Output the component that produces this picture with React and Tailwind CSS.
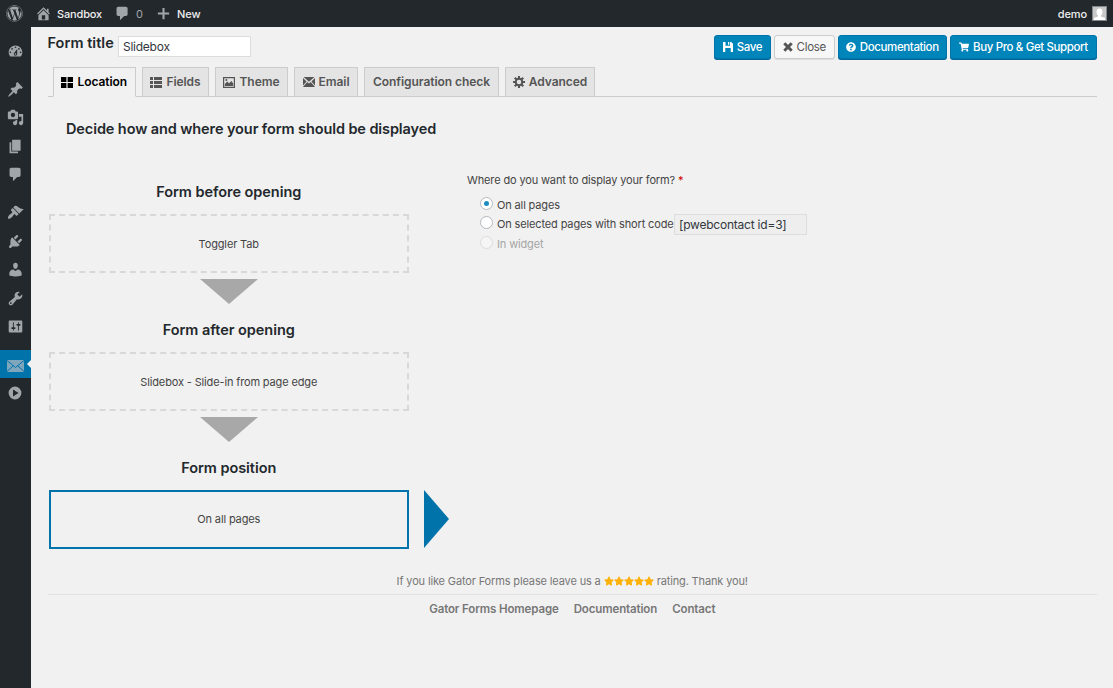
import React from "react";
import { FaWordpress, FaQuestionCircle, FaShoppingCart, FaStar } from "react-icons/fa";

const paths = {
  home: "M16 8.5l1.53 1.53-1.06 1.06L10 4.6l-6.47 6.49-1.06-1.06L10 2.5l4 4v-2h2v4zm-6-2.46l6 5.99V18H4v-5.97zM12 17v-5H8v5h4z",
  plus: "M17.5 8.6v2.8h-6.100v6.100H8.600v-6.100H2.500V8.600h6.100V2.500h2.800v6.100z",
  dashboard:
    "M3.76 16h12.48c1.1-1.37 1.76-3.11 1.76-5 0-4.42-3.58-8-8-8s-8 3.58-8 8c0 1.89.66 3.63 1.76 5zM10 4c.55 0 1 .45 1 1s-.45 1-1 1-1-.45-1-1 .45-1 1-1zM6 6c.55 0 1 .45 1 1s-.45 1-1 1-1-.45-1-1 .45-1 1-1zm8 0c.55 0 1 .45 1 1s-.45 1-1 1-1-.45-1-1 .45-1 1-1zm-5.37 5.55L12 7v6c0 1.1-.9 2-2 2s-2-.9-2-2c0-.57.24-1.08.63-1.45zM4 10c.55 0 1 .45 1 1s-.45 1-1 1-1-.45-1-1 .45-1 1-1zm12 0c.55 0 1 .45 1 1s-.45 1-1 1-1-.45-1-1 .45-1 1-1zm-5 3c0-.55-.45-1-1-1s-1 .45-1 1 .45 1 1 1 1-.45 1-1z",
  pin: "M10.44 3.02l1.82-1.82 6.36 6.35-1.83 1.82c-1.05-.68-2.48-.57-3.41.36l-.75.75c-.92.93-1.04 2.35-.35 3.41l-1.83 1.82-2.41-2.41-2.8 2.79c-.42.42-3.38 2.71-3.8 2.29s1.86-3.39 2.28-3.81l2.79-2.79L4.1 9.36l1.83-1.82c1.05.69 2.48.57 3.4-.36l.75-.75c.93-.92 1.05-2.35.36-3.41z",
  media:
    "M13 11V4c0-.55-.45-1-1-1h-1.67L9 1H5L3.67 3H2c-.55 0-1 .45-1 1v7c0 .55.45 1 1 1h10c.55 0 1-.45 1-1zM7 4.500c1.380 0 2.500 1.120 2.500 2.500S8.380 9.500 7 9.500 4.500 8.380 4.500 7 5.620 4.500 7 4.500zM14 6h5v10.500c0 1.380-1.120 2.500-2.500 2.500S14 17.880 14 16.500s1.120-2.500 2.500-2.500c.17 0 .34.02.5.05V9h-3V6zm-4 8.050V13h2v3.500c0 1.380-1.120 2.500-2.500 2.500S7 17.880 7 16.500 8.120 14 9.500 14c.17 0 .34.02.5.05z",
  page: "M6 15V2h10v13H6zm-1 1h8v2H3V5h2v11z",
  comment: "M5 2h9c1.1 0 2 .9 2 2v7c0 1.1-.9 2-2 2h-2l-5 5v-5H5c-1.1 0-2-.9-2-2V4c0-1.1.9-2 2-2z",
  brush:
    "M14.48 11.06L7.41 3.99l1.5-1.5c.5-.56 2.3-.47 3.51.32 1.21.8 1.43 1.28 2.91 2.1 1.18.64 2.45 1.26 4.45.85zm-.71.71L6.7 4.7 4.93 6.47c-.39.39-.39 1.02 0 1.41l1.06 1.06c.39.39.39 1.03 0 1.42-.6.6-1.43 1.11-2.21 1.69-.35.26-.7.53-1.01.84C1.43 14.23.4 16.08 1.4 17.07c.99 1 2.84-.03 4.18-1.36.31-.31.58-.66.85-1.02.57-.78 1.08-1.61 1.69-2.21.39-.39 1.02-.39 1.41 0l1.06 1.06c.39.39 1.02.39 1.41 0z",
  plug: "M13.11 4.36L9.87 7.6 8 5.73l3.24-3.24c.35-.34 1.05-.2 1.56.32.52.51.66 1.21.31 1.55zm-8 1.77l.91-1.12 9.01 9.01-1.19.84c-.71.71-2.63 1.16-3.82 1.16H6.14L4.9 17.26c-.59.59-1.54.59-2.12 0-.59-.58-.59-1.53 0-2.12l1.24-1.24v-3.88c0-1.13.4-3.19 1.09-3.89zm7.26 3.97l3.24-3.24c.34-.35 1.04-.21 1.55.31.52.51.66 1.21.31 1.55l-3.24 3.25z",
  user: "M10 9.25c-2.27 0-2.73-3.44-2.73-3.44C7 4.02 7.82 2 9.97 2c2.16 0 2.98 2.02 2.71 3.81 0 0-.41 3.44-2.68 3.44zm0 2.57L12.72 10c2.39 0 4.52 2.33 4.52 4.53v2.49s-3.65 1.13-7.24 1.13c-3.65 0-7.24-1.13-7.24-1.13v-2.49c0-2.25 1.94-4.48 4.47-4.48z",
  wrench:
    "M16.68 9.77c-1.34 1.34-3.3 1.67-4.95.99l-5.41 6.52c-.99.99-2.59.99-3.58 0s-.99-2.59 0-3.57l6.52-5.42c-.68-1.65-.35-3.61.99-4.95 1.28-1.28 3.12-1.62 4.72-1.06l-2.89 2.89 2.82 2.82 2.86-2.87c.53 1.58.18 3.39-1.08 4.65zM3.81 16.21c.4.39 1.04.39 1.43 0 .4-.4.4-1.04 0-1.43-.39-.4-1.03-.4-1.43 0-.39.39-.39 1.03 0 1.43z",
  settings:
    "M18 16V4c0-.55-.45-1-1-1H3c-.55 0-1 .45-1 1v12c0 .55.45 1 1 1h14c.55 0 1-.45 1-1zM8 11h1c.55 0 1 .45 1 1s-.45 1-1 1H8v1.500c0 .28-.22.5-.5.5s-.5-.22-.5-.5V13H6c-.55 0-1-.45-1-1s.45-1 1-1h1V5.500c0-.28.22-.5.5-.5s.5.22.5.5V11zm5-2h-1c-.55 0-1-.45-1-1s.45-1 1-1h1V5.500c0-.28.22-.5.5-.5s.5.22.5.5V7h1c.55 0 1 .45 1 1s-.45 1-1 1h-1v5.500c0 .28-.22.5-.5.5s-.5-.22-.5-.5V9z",
  play: "M10 2a8 8 0 1 0 0 16 8 8 0 0 0 0-16zM7.500 5.500L14.500 10l-7 4.500z",
};

function Icon({ name, className = "size-[17px]" }) {
  return (
    <svg viewBox="0 0 20 20" className={`shrink-0 ${className}`} fill="currentColor" fillRule="evenodd">
      <path d={paths[name]} />
    </svg>
  );
}

function GridIcon() {
  return (
    <svg viewBox="0 0 12 12" className="h-[11px] w-[12px]" preserveAspectRatio="none" fill="currentColor">
      <path d="M0 0h5.400v5.400H0zM6.600 0H12v5.400H6.600zM0 6.600h5.400V12H0zM6.600 6.600H12V12H6.600z" />
    </svg>
  );
}

function ListIcon() {
  return (
    <svg viewBox="0 0 12 11" className="h-[11px] w-[12px]" fill="currentColor">
      <path d="M0 0h3v3H0zM4 0h8v3H4zM0 4h3v3H0zM4 4h8v3H4zM0 8h3v3H0zM4 8h8v3H4z" />
    </svg>
  );
}

function ImageIcon() {
  return (
    <svg viewBox="0 0 12 11" className="h-[11px] w-[12px]" fill="currentColor" fillRule="evenodd">
      <path d="M0 0h12v11H0zM1.200 1.200v8.600h9.600V1.200z" />
      <path d="M1.800 9V7l2.400-2.500 1.800 1.800L8.500 4l1.700 2.500V9z" />
      <circle cx="3.400" cy="3" r="1" />
    </svg>
  );
}

function MailIcon() {
  return (
    <svg viewBox="0 0 12 10" className="h-[10px] w-[12px]" fill="currentColor">
      <path d="M.6 0h10.800L6 4.800zM0 1l3.600 3.400L0 8.500zM12 1v7.500L8.400 4.400zM4.300 5L6 6.500 7.700 5l4 4.500V10H.3v-.5z" />
    </svg>
  );
}

function GearIcon() {
  return (
    <svg viewBox="0 0 24 24" className="size-[12px]" fill="none" stroke="currentColor">
      <circle cx="12" cy="12" r="6.500" strokeWidth="4" />
      <path
        d="M12 0v5M12 19v5M0 12h5M19 12h5M3.500 3.500l3.600 3.600M16.900 16.900l3.600 3.600M3.500 20.500l3.600-3.600M16.900 7.100l3.600-3.600"
        strokeWidth="4.200"
      />
    </svg>
  );
}

function SaveIcon() {
  return (
    <svg viewBox="0 0 11 11" className="h-[10px] w-[10px]" fill="currentColor" fillRule="evenodd">
      <path d="M0 0h2.800v4.200h4.900V0H9l2 2v9H8.500V6.500h-6V11H0zM5.500 0h1.400v3H5.500z" />
    </svg>
  );
}

function CloseIcon() {
  return (
    <svg viewBox="0 0 10 10" className="size-[10px]" fill="none" stroke="currentColor" strokeWidth="3">
      <path d="M1.300 1.300l7.400 7.400M8.700 1.300L1.300 8.700" />
    </svg>
  );
}

const menu = [
  ["dashboard", "h-[38px] mb-[5px]"],
  ["pin", "h-[28.500px]"],
  ["media", "h-[28.500px]"],
  ["page", "h-[28.500px]"],
  ["comment", "h-[38px] pb-[9.500px]"],
  ["brush", "h-[28.500px]"],
  ["plug", "h-[28.500px]"],
  ["user", "h-[28.500px]"],
  ["wrench", "h-[28.500px]"],
  ["settings", "h-[28.500px]"],
];

function AdminBar() {
  return (
    <header className="flex h-[27px] shrink-0 items-center bg-[#23282d] pr-[6px] pl-[6px] text-[11px] font-medium text-[#eee]">
      <FaWordpress className="size-[17px] text-[#a0a5aa]" />
      <Icon name="home" className="ml-[12px] size-[17px] text-[#a0a5aa]" />
      <span className="ml-[5px] w-[45px] pt-px tracking-[-0.15px] whitespace-nowrap">Sandbox</span>
      <Icon name="comment" className="ml-[12px] size-[17px] text-[#a0a5aa]" />
      <span className="ml-[5px] w-[7px] pt-px font-normal text-[#a0a5aa]">0</span>
      <Icon name="plus" className="ml-[13px] size-[15px] text-[#a0a5aa]" />
      <span className="ml-[6px] pt-px tracking-[-0.1px]">New</span>
      <span className="ml-auto pt-px tracking-[-0.1px]">demo</span>
      <span className="ml-[5px] flex size-[15px] items-end justify-center overflow-hidden border border-[#82878c] bg-[#c8c8c8]">
        <svg viewBox="0 0 13 13" className="size-[13px]" fill="#fff">
          <ellipse cx="6.500" cy="5" rx="3" ry="3.600" />
          <path d="M5 8h3v1.500l4 1.500v2H1v-2l4-1.500z" />
        </svg>
      </span>
    </header>
  );
}

function Sidebar() {
  return (
    <nav className="flex w-[30.500px] shrink-0 flex-col bg-[#23282d] pt-[5px] text-[#a0a5aa]">
      {menu.map(([name, cls]) => (
        <a key={name} className={`flex shrink-0 items-center justify-center ${cls}`}>
          <Icon name={name} />
        </a>
      ))}
      <a className="relative mt-[9px] flex h-[28px] shrink-0 items-center justify-center bg-[#0073aa]">
        <svg viewBox="0 0 17 12" className="mt-[3px] h-[12px] w-[17px]">
          <path d="M0 0h17v12H0z" fill="#7fa6bd" />
          <path d="M0 .5l8.500 7L17 .5M0 11.500l6.200-5.700M17 11.500l-6.200-5.700" fill="none" stroke="#0073aa" />
        </svg>
        <svg viewBox="0 0 4 8" className="absolute top-[10px] right-0 h-[8px] w-[4px]" fill="#f1f1f1">
          <path d="M4 0v8L0 4z" />
        </svg>
      </a>
      <a className="flex h-[29px] shrink-0 items-center justify-center">
        <Icon name="play" className="size-[16px]" />
      </a>
    </nav>
  );
}

function Button({ width, light, icon, children }) {
  return (
    <button
      className={`flex h-[24px] items-center justify-center gap-[4px] rounded-[3px] border whitespace-nowrap ${width} ${
        light
          ? "border-[#ccc] bg-[#f7f7f7] text-[11.500px] tracking-[-0.3px] text-[#555] shadow-[0_1px_0_#ddd]"
          : "border-[#0073aa] bg-[#0085ba] text-[11.500px] font-medium tracking-[-0.38px] text-white shadow-[0_1px_0_#006799]"
      }`}
    >
      {icon}
      <span className="pt-px">{children}</span>
    </button>
  );
}

function Tab({ width, active, icon, children }) {
  return (
    <a
      className={`flex items-center justify-center gap-[4px] border border-[#ccc] text-[12px] font-semibold tracking-[-0.05px] whitespace-nowrap ${width} ${
        active ? "h-[30px] border-b-[#f1f1f1] bg-[#f1f1f1] text-black" : "mb-px h-[29px] border-b-0 bg-[#e4e4e4] text-[#555]"
      }`}
    >
      {icon}
      {children}
    </a>
  );
}

function Step({ title, children, active }) {
  return (
    <section className="relative">
      <h3 className="flex h-[44px] items-center justify-center text-[14.500px] font-semibold tracking-[-0.05px] text-[#23282d]">
        {title}
      </h3>
      <div
        className={`flex h-[58.500px] items-center justify-center border-2 text-[11px] tracking-[-0.14px] ${
          active ? "border-[#0073aa]" : "border-dashed border-[#d8d8d8] pt-px"
        }`}
      >
        {children}
      </div>
      {active ? (
        <svg viewBox="0 0 25 58" className="absolute bottom-[0.500px] left-[374.500px] h-[58px] w-[25px]" fill="#0073aa">
          <path d="M0 0l25 29L0 58z" />
        </svg>
      ) : (
        <svg viewBox="0 0 58 25" className="mx-auto mt-[6.500px] mb-[4px] block h-[25px] w-[58px]" fill="#a8a8a8">
          <path d="M0 0h58L29 25z" />
        </svg>
      )}
    </section>
  );
}

function Radio({ checked, disabled }) {
  return (
    <span
      className={`flex size-[13px] shrink-0 items-center justify-center rounded-full border ${
        disabled ? "border-[#dcdcdc] bg-[#f5f5f5]" : "border-[#b4b9be] bg-white"
      }`}
    >
      {checked && <span className="size-[5px] rounded-full bg-[#1e8cbe]" />}
    </span>
  );
}

export default function App() {
  return (
    <div className="flex h-[688px] w-[1113px] flex-col overflow-hidden bg-[#f1f1f1] font-['Inter',sans-serif] text-[11px] text-[#444]">
      <AdminBar />
      <div className="flex min-h-0 flex-1">
        <Sidebar />
        <main className="flex flex-1 flex-col pr-[16px] pl-[17px]">
          <div className="flex h-[40px] items-start pt-[8.500px]">
            <label className="mt-[-3px] w-[70.500px] text-[14.500px] leading-[20px] font-semibold tracking-[0.04px] whitespace-nowrap text-[#23282d]">
              Form title
            </label>
            <div className="flex h-[21px] w-[133px] items-center border border-[#ddd] bg-white pt-px pl-[4px] text-[12px] tracking-[-0.25px] text-[#32373c]">
              Slidebox
            </div>
            <div className="mt-[-0.500px] ml-auto flex gap-[3px]">
              <Button width="w-[57px]" icon={<SaveIcon />}>Save</Button>
              <Button width="w-[60.500px]" light icon={<CloseIcon />}>Close</Button>
              <Button width="w-[109.500px]" icon={<FaQuestionCircle className="size-[10px]" />}>Documentation</Button>
              <Button width="w-[147px]" icon={<FaShoppingCart className="size-[10px]" />}>Buy Pro &amp; Get Support</Button>
            </div>
          </div>

          <div className="h-[30px] border-b border-[#ccc]">
            <div className="flex h-[30px] items-end gap-[6px] pl-[5px]">
              <Tab width="w-[83.500px]" active icon={<GridIcon />}>Location</Tab>
              <Tab width="w-[67px]" icon={<ListIcon />}>Fields</Tab>
              <Tab width="w-[73px]" icon={<ImageIcon />}>Theme</Tab>
              <Tab width="w-[64px]" icon={<MailIcon />}>Email</Tab>
              <Tab width="w-[135px]">Configuration check</Tab>
              <Tab width="w-[90px]" icon={<GearIcon />}>Advanced</Tab>
            </div>
          </div>

          <h2 className="mt-[22px] ml-[18.500px] h-[20px] text-[14.500px] leading-[20px] font-semibold tracking-[-0.1px] whitespace-nowrap text-[#23282d]">
            Decide how and where your form should be displayed
          </h2>

          <div className="mt-[31px] flex h-[379px]">
            <div className="ml-[1.500px] w-[359.500px] shrink-0">
              <Step title="Form before opening">Toggler Tab</Step>
              <Step title="Form after opening">Slidebox - Slide-in from page edge</Step>
              <Step title="Form position" active>On all pages</Step>
            </div>
            <div className="ml-[58.500px] flex flex-col pt-[2px]">
              <p className="leading-[16px] tracking-[-0.14px] whitespace-nowrap">
                Where do you want to display your form? <span className="text-[#c00]">*</span>
              </p>
              <div className="mt-[5px] ml-[13px] flex flex-col text-[11px] tracking-[-0.14px]">
                <div className="flex h-[20px] items-center gap-[4px]"><Radio checked /><span className="pt-[4px]">On all pages</span></div>
                <div className="flex h-[19px] items-center gap-[4px]">
                  <Radio />
                  <span className="w-[177px] pt-[4px] whitespace-nowrap">On selected pages with short code</span>
                  <span className="mt-[3px] -ml-[4px] flex h-[21px] w-[133px] items-center border border-[#ddd] bg-[#eee] pt-px pl-[4px] text-[12px] tracking-[-0.22px] text-[#32373c]">
                    [pwebcontact id=3]
                  </span>
                </div>
                <div className="flex h-[20px] items-center gap-[4px] text-[#a5a5a5]"><Radio disabled /><span className="pt-[4px]">In widget</span></div>
              </div>
            </div>
          </div>

          <footer className="mt-[22.500px] text-center text-[#777]">
            <div className="flex h-[23px] items-start justify-center border-b border-[#e2e2e2] leading-[18px] tracking-[-0.14px]">
              <span>If you like Gator Forms please leave us a</span>
              <span className="mx-[3px] mt-[4px] flex text-[#ffb10b]">
                {[0, 1, 2, 3, 4].map((i) => <FaStar key={i} className="h-[10px] w-[10px]" />)}
              </span>
              <span>rating. Thank you!</span>
            </div>
            <div className="flex justify-center gap-[15px] pt-[5px] text-[11.500px] leading-[18px] font-semibold tracking-[-0.12px]">
              <a>Gator Forms Homepage</a>
              <a>Documentation</a>
              <a>Contact</a>
            </div>
          </footer>
        </main>
      </div>
    </div>
  );
}
